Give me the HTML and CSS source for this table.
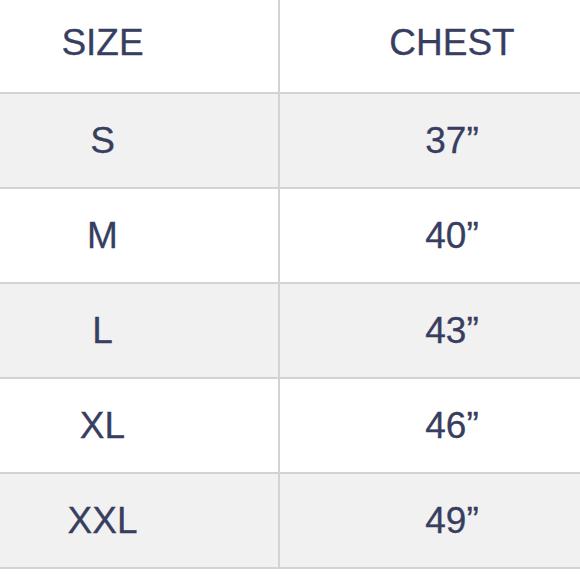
FILE: index.html
```html
<!DOCTYPE html>
<html>
<head>
<meta charset="utf-8">
<link rel="stylesheet" href="styles.css">
</head>
<body>
<div class="table">
  <div class="row head"><div class="cell size">SIZE</div><div class="cell chest">CHEST</div></div>
  <div class="row alt"><div class="cell size">S</div><div class="cell chest">37”</div></div>
  <div class="row"><div class="cell size">M</div><div class="cell chest">40”</div></div>
  <div class="row alt"><div class="cell size">L</div><div class="cell chest">43”</div></div>
  <div class="row"><div class="cell size">XL</div><div class="cell chest">46”</div></div>
  <div class="row alt"><div class="cell size">XXL</div><div class="cell chest">49”</div></div>
</div>
</body>
</html>
```
FILE: styles.css
```css
html, body {
  margin: 0;
  padding: 0;
  background: #ffffff;
}
.table {
  width: 580px;
  height: 580px;
  overflow: hidden;
  font-family: "Liberation Sans", Arial, sans-serif;
  font-size: 37px;
  color: #383e5f;
  -webkit-text-stroke: 0.3px #383e5f;
}
.row {
  display: grid;
  grid-template-columns: 280px 300px;
  height: 93px;
  border-bottom: 2px solid #d3d3d3;
}
.row.head {
  height: 92px;
}
.row.alt {
  background: #f1f1f1;
}
.cell {
  display: flex;
  align-items: center;
  justify-content: center;
}
.cell.size {
  border-right: 2px solid #d3d3d3;
  padding-right: 73px;
}
.cell.chest {
  padding-left: 44px;
}
.head .cell {
  padding-bottom: 6px;
}
```
